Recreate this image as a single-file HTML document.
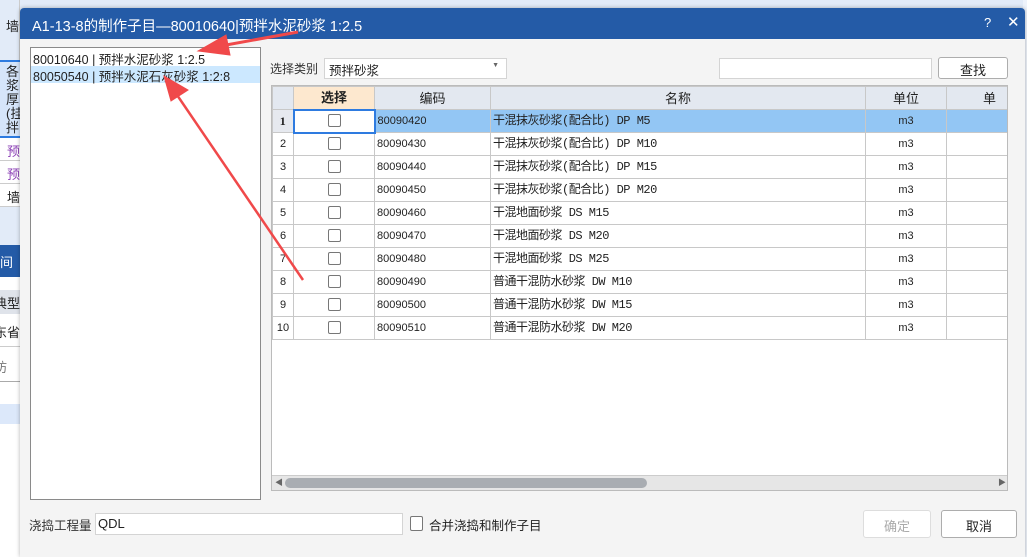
<!DOCTYPE html>
<html><head><meta charset="utf-8"><style>
*{margin:0;padding:0;box-sizing:border-box}
body{width:1027px;height:557px;overflow:hidden;position:relative;background:#fff;font-family:"Liberation Sans","Noto Sans CJK SC",sans-serif;font-size:12px;color:#222}
.a{position:absolute}
.s{position:absolute;left:0;width:20px;overflow:hidden;white-space:nowrap;font-size:13px}
table{border-collapse:collapse;table-layout:fixed}
td,th{border:1px solid #c8c8c8;height:23px;font-weight:normal;white-space:nowrap;overflow:hidden;font-size:11px;vertical-align:middle;line-height:21px;padding:0 2px}
th{background:#e3e8f0;font-size:13px}
td.n{font-family:"Liberation Mono","Noto Sans CJK SC",monospace;font-size:12px;letter-spacing:-0.5px}
.cb{display:inline-block;width:13px;height:13px;border:1px solid #777;border-radius:2px;background:#fff;vertical-align:middle}
.btn{position:absolute;border:1px solid #adadad;border-radius:3px;background:#fff;text-align:center;font-size:13px}
.inp{position:absolute;border:1px solid #d4d4d4;background:#fff}
</style></head><body>
<div class="a" style="left:0;top:0;width:1027px;height:60px;background:#e2ebf8"></div>
<div class="s" style="top:0;height:60px;background:#e2ebf8;border-right:1px solid #ccc;padding:16px 0 0 6px">墙</div>
<div class="s" style="top:60px;height:78px;background:#d6e5fa;border-top:2px solid #2e7be0;border-bottom:2px solid #2e7be0;line-height:14px;padding:3px 0 0 6px">各<br>浆<br>厚<br>(挂<br>拌</div>
<div class="s" style="top:138px;height:23px;border-bottom:1px solid #ccc;color:#8b3fb5;padding:3px 0 0 7px">预</div>
<div class="s" style="top:161px;height:23px;border-bottom:1px solid #ccc;color:#8b3fb5;padding:3px 0 0 7px">预</div>
<div class="s" style="top:184px;height:23px;border-bottom:1px solid #ccc;padding:3px 0 0 7px">墙</div>
<div class="s" style="top:207px;height:38px;background:#e2ebf8"></div>
<div class="s" style="top:245px;height:32px;background:#245ba7;color:#fff;padding-top:7px">间</div>
<div class="s" style="top:290px;height:24px;background:#dfe3ea;padding-top:3px;text-indent:-6px">典型</div>
<div class="s" style="top:315px;height:32px;border-bottom:1px solid #ccc;padding-top:7px;text-indent:-6px">东省</div>
<div class="s" style="top:350px;height:32px;border-bottom:1px solid #aaa;color:#777;padding-top:7px;text-indent:-6px">坊</div>
<div class="s" style="top:404px;height:20px;background:#dce8fa"></div>
<div class="a" style="left:1023px;top:0;width:4px;height:557px;background:#eef3fb"></div>

<div class="a" style="left:20px;top:8px;width:1005px;height:549px;background:#f4f4f4;box-shadow:0 0 4px rgba(0,0,0,.3);border-radius:4px 4px 0 0;overflow:hidden">
 <div class="a" style="left:0;top:0;width:1005px;height:31px;background:#245ba7;color:#fff;font-size:14.5px;padding:7px 0 0 12px">A1-13-8的制作子目—80010640|预拌水泥砂浆 1:2.5</div>
 <div class="a" style="left:964px;top:7px;color:#fff;font-size:13px">?</div>
 <div class="a" style="left:987px;top:5px;color:#fff;font-size:15px">✕</div>
</div>
<div class="a" style="left:30px;top:47px;width:231px;height:453px;background:#fff;border:1px solid #8a8a8a"></div>
<div class="a" style="left:33px;top:49px;font-size:12.5px">80010640 | 预拌水泥砂浆 1:2.5</div>
<div class="a" style="left:31px;top:66px;width:229px;height:17px;background:#cce8ff"></div>
<div class="a" style="left:33px;top:66px;font-size:12.5px">80050540 | 预拌水泥石灰砂浆 1:2:8</div>

<div class="a" style="left:270px;top:60px;font-size:12px;color:#333">选择类别</div>
<div class="inp" style="left:324px;top:58px;width:183px;height:21px;font-size:12.5px;padding:1px 0 0 4px">预拌砂浆<span style="position:absolute;right:7px;top:3px;font-size:7px;color:#666">▼</span></div>
<div class="inp" style="left:719px;top:58px;width:213px;height:21px"></div>
<div class="btn" style="left:938px;top:57px;width:70px;height:22px;padding-top:2px">查找</div>

<div class="a" style="left:271px;top:85px;width:737px;height:406px;background:#fff;border:1px solid #bbb;overflow:hidden">
<table style="width:760px">
<colgroup><col style="width:21px"><col style="width:81px"><col style="width:116px"><col style="width:375px"><col style="width:81px"><col style="width:86px"></colgroup>
<tr><th></th><th style="background:#fde8cf;font-weight:bold">选择</th><th>编码</th><th>名称</th><th>单位</th><th>单</th></tr>
<tr style="background:#93c6f4"><td style="background:#e6e9ef;text-align:center;font-weight:bold;font-family:'Liberation Serif',serif;font-size:12px">1</td><td style="background:#fff;border:2px solid #2e7be0;text-align:center"><span class="cb"></span></td><td>80090420</td><td class="n">干混抹灰砂浆(配合比) DP M5</td><td style="text-align:center">m3</td><td></td></tr>
<tr><td style="text-align:center">2</td><td style="text-align:center"><span class="cb"></span></td><td>80090430</td><td class="n">干混抹灰砂浆(配合比) DP M10</td><td style="text-align:center">m3</td><td></td></tr>
<tr><td style="text-align:center">3</td><td style="text-align:center"><span class="cb"></span></td><td>80090440</td><td class="n">干混抹灰砂浆(配合比) DP M15</td><td style="text-align:center">m3</td><td></td></tr>
<tr><td style="text-align:center">4</td><td style="text-align:center"><span class="cb"></span></td><td>80090450</td><td class="n">干混抹灰砂浆(配合比) DP M20</td><td style="text-align:center">m3</td><td></td></tr>
<tr><td style="text-align:center">5</td><td style="text-align:center"><span class="cb"></span></td><td>80090460</td><td class="n">干混地面砂浆 DS M15</td><td style="text-align:center">m3</td><td></td></tr>
<tr><td style="text-align:center">6</td><td style="text-align:center"><span class="cb"></span></td><td>80090470</td><td class="n">干混地面砂浆 DS M20</td><td style="text-align:center">m3</td><td></td></tr>
<tr><td style="text-align:center">7</td><td style="text-align:center"><span class="cb"></span></td><td>80090480</td><td class="n">干混地面砂浆 DS M25</td><td style="text-align:center">m3</td><td></td></tr>
<tr><td style="text-align:center">8</td><td style="text-align:center"><span class="cb"></span></td><td>80090490</td><td class="n">普通干混防水砂浆 DW M10</td><td style="text-align:center">m3</td><td></td></tr>
<tr><td style="text-align:center">9</td><td style="text-align:center"><span class="cb"></span></td><td>80090500</td><td class="n">普通干混防水砂浆 DW M15</td><td style="text-align:center">m3</td><td></td></tr>
<tr><td style="text-align:center">10</td><td style="text-align:center"><span class="cb"></span></td><td>80090510</td><td class="n">普通干混防水砂浆 DW M20</td><td style="text-align:center">m3</td><td></td></tr>
</table>
<div class="a" style="left:0;top:389px;width:737px;height:16px;background:#e6e6e6;border-top:1px solid #ccc"></div>
<div class="a" style="left:13px;top:392px;width:362px;height:10px;background:#a9adb2;border-radius:5px"></div>
<div class="a" style="left:3px;top:391px;font-size:8px;color:#666">◀</div>
<div class="a" style="left:726px;top:391px;font-size:8px;color:#666">▶</div>
</div>

<div class="a" style="left:29px;top:515px;font-size:12.5px;color:#333">浇捣工程量</div>
<div class="inp" style="left:95px;top:513px;width:308px;height:22px;font-size:13px;padding:2px 0 0 2px">QDL</div>
<span class="cb a" style="left:410px;top:516px;width:13px;height:15px"></span>
<div class="a" style="left:429px;top:515px;font-size:12.5px">合并浇捣和制作子目</div>
<div class="btn" style="left:863px;top:510px;width:68px;height:28px;padding-top:5px;color:#aaa;border-color:#ddd">确定</div>
<div class="btn" style="left:941px;top:510px;width:76px;height:28px;padding-top:5px">取消</div>

<svg class="a" style="left:0;top:0" width="1027" height="557">
<g fill="#f0494a" stroke="#f0494a">
<line x1="298" y1="32" x2="215" y2="47" stroke-width="3"/>
<polygon points="198,51 226,35 230,55"/>
<line x1="303" y1="280" x2="175" y2="92" stroke-width="2.5"/>
<polygon points="164,76 188,90 171,101"/>
</g>
</svg>
</body></html>
